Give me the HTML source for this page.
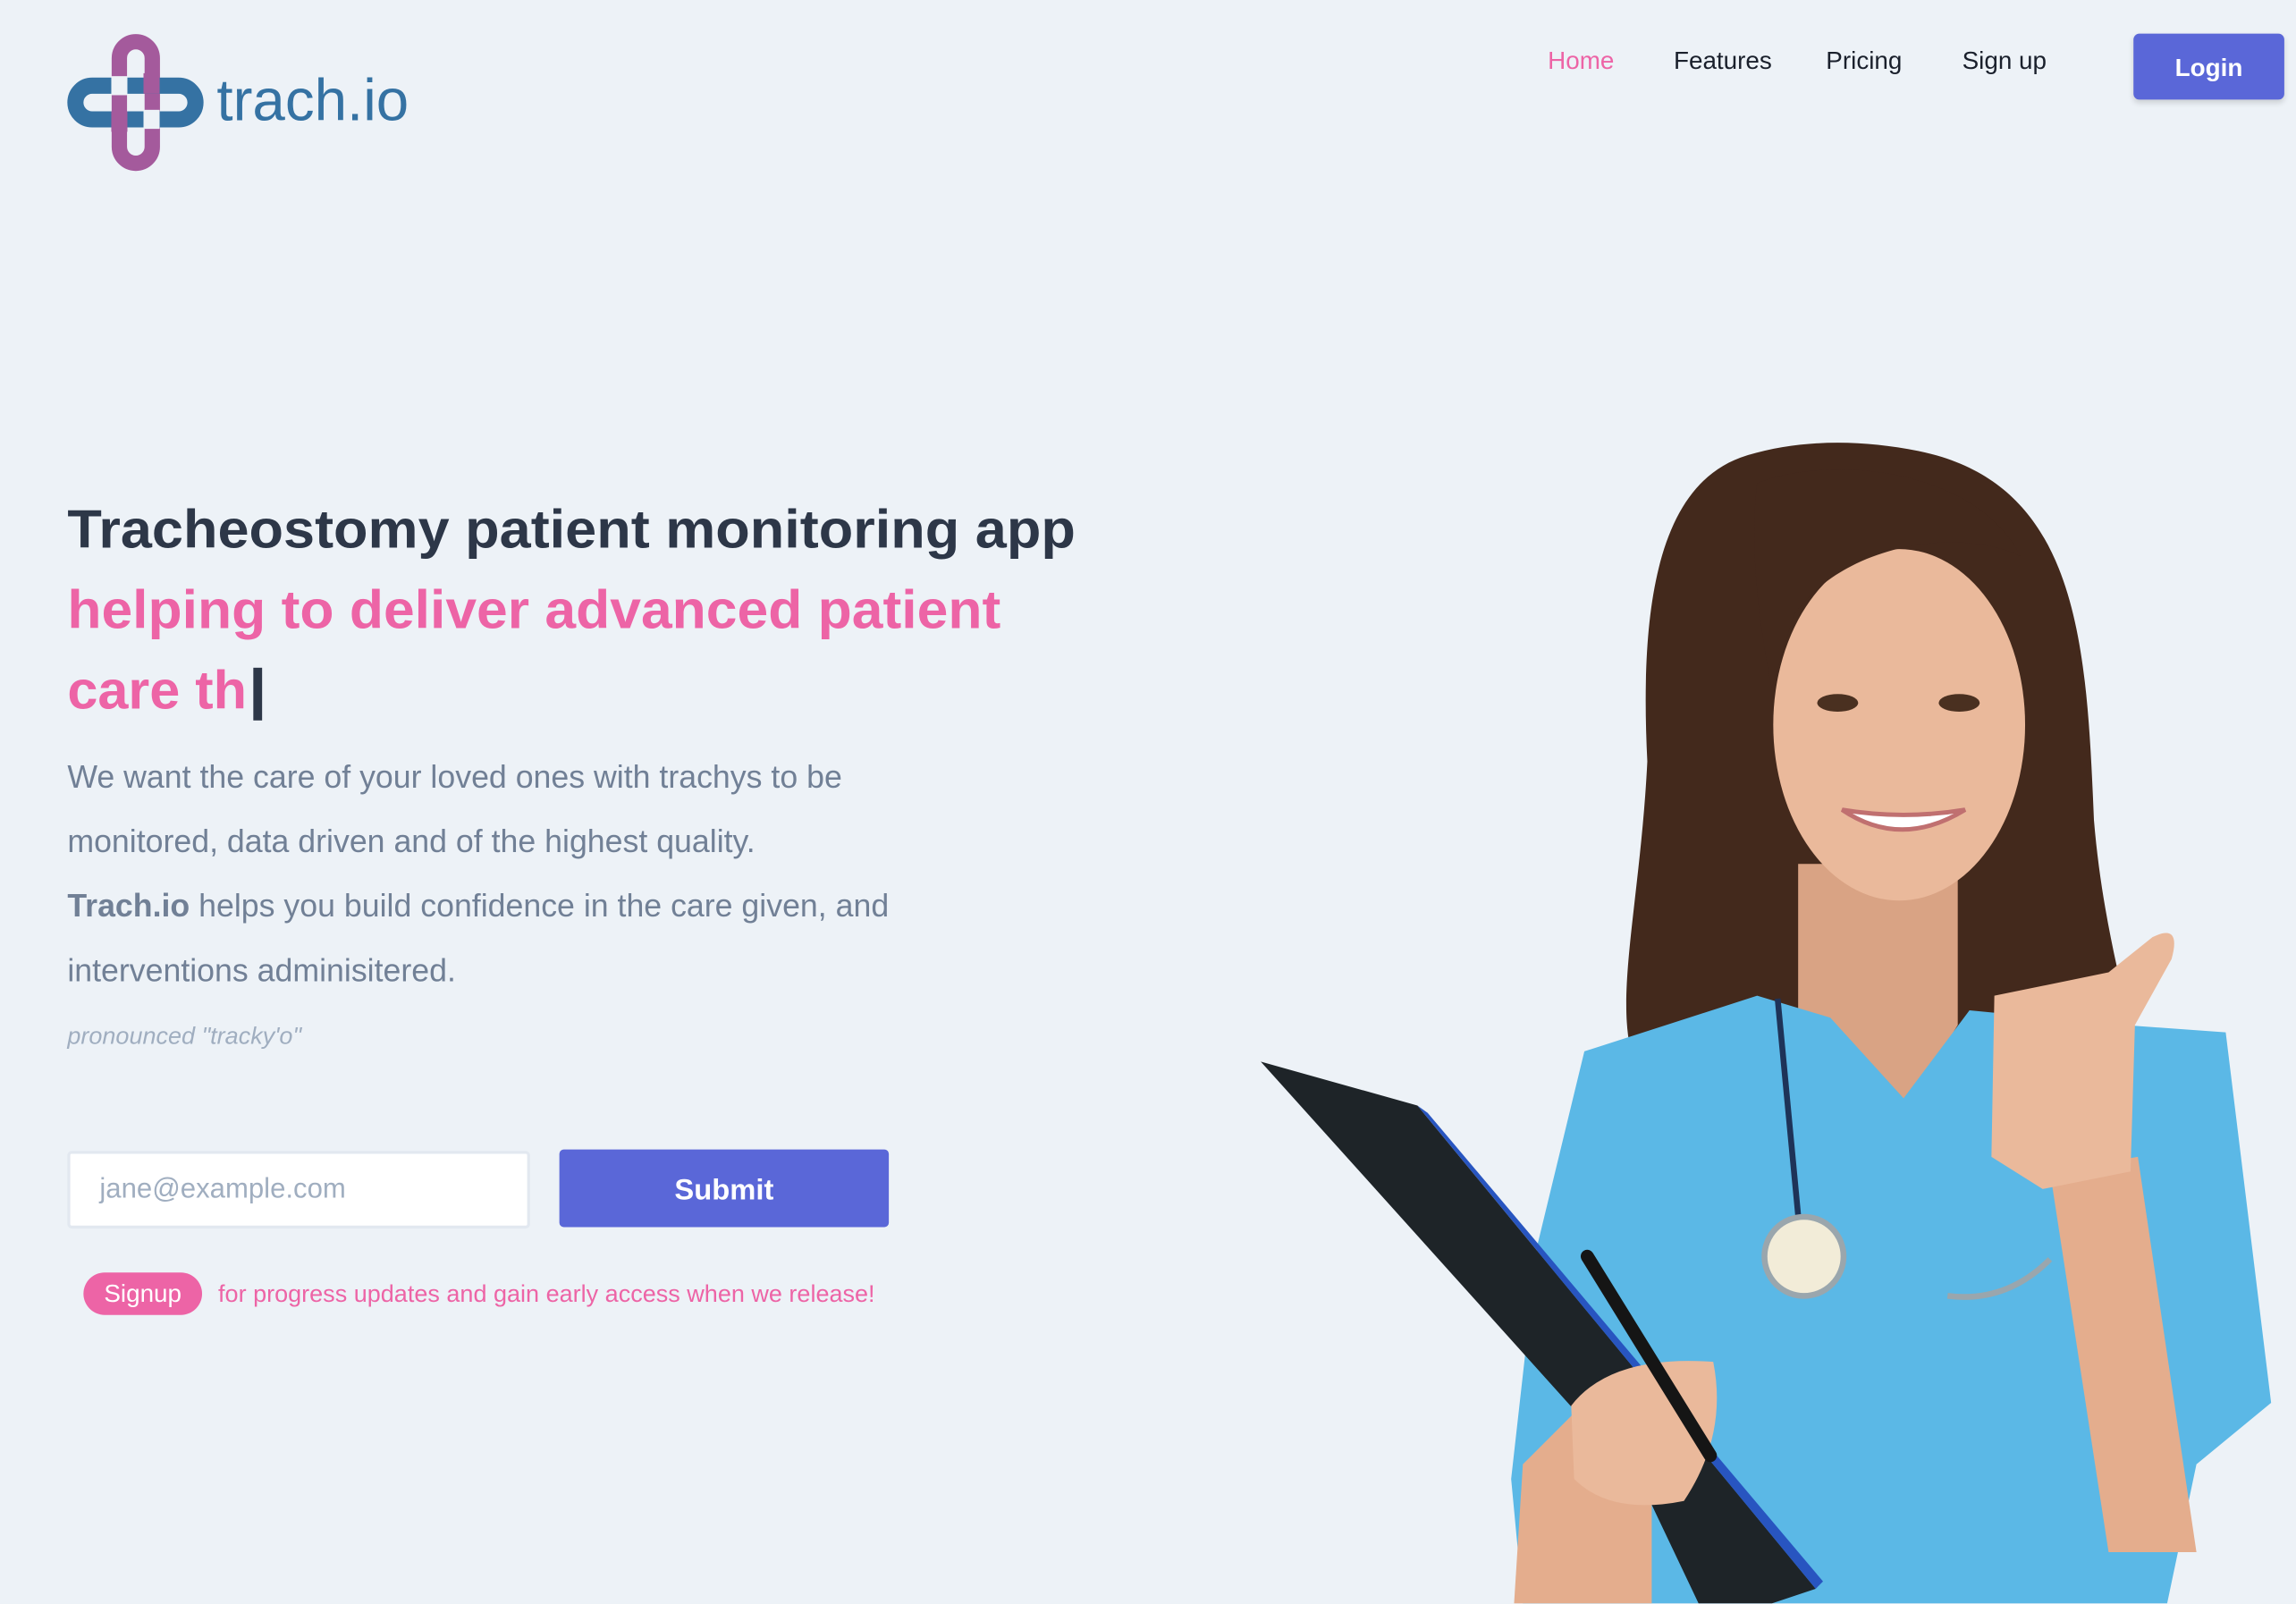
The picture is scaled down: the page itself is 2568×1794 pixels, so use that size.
<!DOCTYPE html>
<html><head><meta charset="utf-8"><style>
html,body{margin:0;padding:0;background:#edf2f7;overflow:hidden;}
body{width:2568px;height:1794px;}
#w{position:absolute;left:0;top:0;width:1568px;height:1095px;transform:scale(1.63776);transform-origin:0 0;font-family:"Liberation Sans",sans-serif;}
.a{position:absolute;white-space:nowrap;}
.nav{font-size:17px;color:#1a202c;top:32px;}
.h{font-weight:bold;font-size:37px;transform-origin:0 50%;}
.p{font-size:21.8px;color:#718096;left:46px;}
</style></head><body><div id="w">
<svg class="a" style="left:0;top:0" width="300" height="130" viewBox="0 0 300 130">
<rect x="81.5" y="28.5" width="22.5" height="83" rx="11.25" fill="none" stroke="#a45a9c" stroke-width="10.5"/>
<rect x="51.5" y="58.5" width="82" height="23" rx="11.5" fill="none" stroke="#3572a3" stroke-width="11"/>
<rect x="76" y="52" width="11" height="13" fill="#edf2f7"/><rect x="98" y="75" width="11" height="13" fill="#edf2f7"/>
<rect x="98" y="50" width="11" height="14" fill="#a45a9c"/><rect x="76" y="76" width="11" height="14" fill="#a45a9c"/>
<text x="148" y="82" font-family="Liberation Sans, sans-serif" font-size="40" fill="#3572a3">trach.io</text>
</svg>
<div class="a nav" style="left:1057px;color:#ed64a6">Home</div>
<div class="a nav" style="left:1143px">Features</div>
<div class="a nav" style="left:1247px">Pricing</div>
<div class="a nav" style="left:1340px">Sign up</div>
<div class="a" style="left:1457px;top:23px;width:103px;height:45px;background:#5a67d8;border-radius:4px;box-shadow:0 2px 4px rgba(0,0,0,.15);color:#fff;font-weight:bold;font-size:17px;line-height:47px;text-align:center">Login</div>

<div class="a h" style="left:46px;top:341px;color:#2d3748;transform:scaleX(1.04)">Tracheostomy patient monitoring app</div>
<div class="a h" style="left:46px;top:396px;color:#ed64a6;transform:scaleX(1.03)">helping to deliver advanced patient</div>
<div class="a h" style="left:46px;top:451px;color:#ed64a6;transform:scaleX(1.01)">care th</div>
<div class="a" style="left:173px;top:456px;width:6px;height:36px;background:#2d3748"></div>

<div class="a p" style="top:518px">We want the care of your loved ones with trachys to be</div>
<div class="a p" style="top:562px">monitored, data driven and of the highest quality.</div>
<div class="a p" style="top:606px"><b>Trach.io</b> helps you build confidence in the care given, and</div>
<div class="a p" style="top:650px">interventions adminisitered.</div>
<div class="a" style="left:46px;top:699px;font-size:16.5px;font-style:italic;color:#a0aec0">pronounced "tracky'o"</div>

<div class="a" style="left:46px;top:786px;width:312px;height:49px;background:#fff;border:2px solid #e2e8f0;border-radius:3px"></div>
<div class="a" style="left:68px;top:802px;font-size:19px;color:#a0aec0">jane@example.com</div>
<div class="a" style="left:382px;top:785px;width:225px;height:53px;background:#5a67d8;border-radius:3px;color:#fff;font-weight:bold;font-size:20px;line-height:56px;text-align:center">Submit</div>
<div class="a" style="left:57px;top:869px;width:81px;height:29px;background:#ed64a6;border-radius:15px;color:#fff;font-size:17px;line-height:29px;text-align:center">Signup</div>
<div class="a" style="left:149px;top:875px;font-size:16.5px;color:#ed64a6">for progress updates and gain early access when we release!</div>

<svg class="a" style="left:0;top:0" width="1568" height="1095" viewBox="0 0 1568 1095">
<path d="M1193 311 C1130 330 1120 420 1125 520 C1120 620 1100 690 1118 730 L1160 760 L1400 760 L1490 880 C1480 760 1440 680 1430 560 C1425 440 1420 330 1310 308 C1270 300 1230 300 1193 311Z" fill="#43291c"/>
<path d="M1228 590 L1337 590 L1337 700 L1300 760 L1250 700 L1228 700Z" fill="#d9a384"/>
<ellipse cx="1297" cy="495" rx="86" ry="120" fill="#eab99b"/>
<path d="M1200 330 C1250 310 1350 320 1380 380 C1340 360 1260 370 1225 420 L1210 470 C1200 420 1195 370 1200 330Z" fill="#43291c"/>
<ellipse cx="1255" cy="480" rx="14" ry="6" fill="#4a3020"/><ellipse cx="1338" cy="480" rx="14" ry="6" fill="#4a3020"/>
<path d="M1258 553 Q1298 580 1342 553 Q1300 560 1258 553Z" fill="#fff" stroke="#c07070" stroke-width="3"/>
<path d="M1082 718 L1200 680 L1250 695 L1300 750 L1345 690 L1450 700 L1520 705 L1551 958 L1500 1000 L1480 1095 L1040 1095 L1032 1010 L1050 850Z" fill="#5bb8e6"/>
<path d="M1400 800 L1460 790 L1500 1060 L1440 1060Z" fill="#e4ad8d"/>
<path d="M1362 680 L1440 664 L1470 640 Q1490 630 1483 655 L1458 700 L1455 800 L1395 812 L1360 790Z" fill="#eab99b"/>
<path d="M1214 682 L1228 830" stroke="#1e3358" stroke-width="4"/>
<ellipse cx="1232" cy="858" rx="27" ry="27" fill="#f2ecd8" stroke="#9aa6ad" stroke-width="4"/>
<path d="M1330 885 Q1370 890 1400 860" stroke="#9aa6ad" stroke-width="4" fill="none"/>
<path d="M861 725 L968 755 L1240 1085 L1210 1095 L1160 1095 L1122 1015Z" fill="#1e2428"/>
<path d="M968 755 L975 760 L1245 1080 L1240 1085Z" fill="#2855c0"/>
<path d="M1034 1095 L1040 1000 L1080 960 L1128 1000 L1128 1095Z" fill="#e4ad8d"/>
<path d="M1073 960 Q1100 925 1170 930 Q1180 980 1150 1025 Q1100 1035 1075 1010Z" fill="#eab99b"/>
<path d="M1084 858 L1168 994" stroke="#151515" stroke-width="9" stroke-linecap="round"/>
</svg>
</div></body></html>
